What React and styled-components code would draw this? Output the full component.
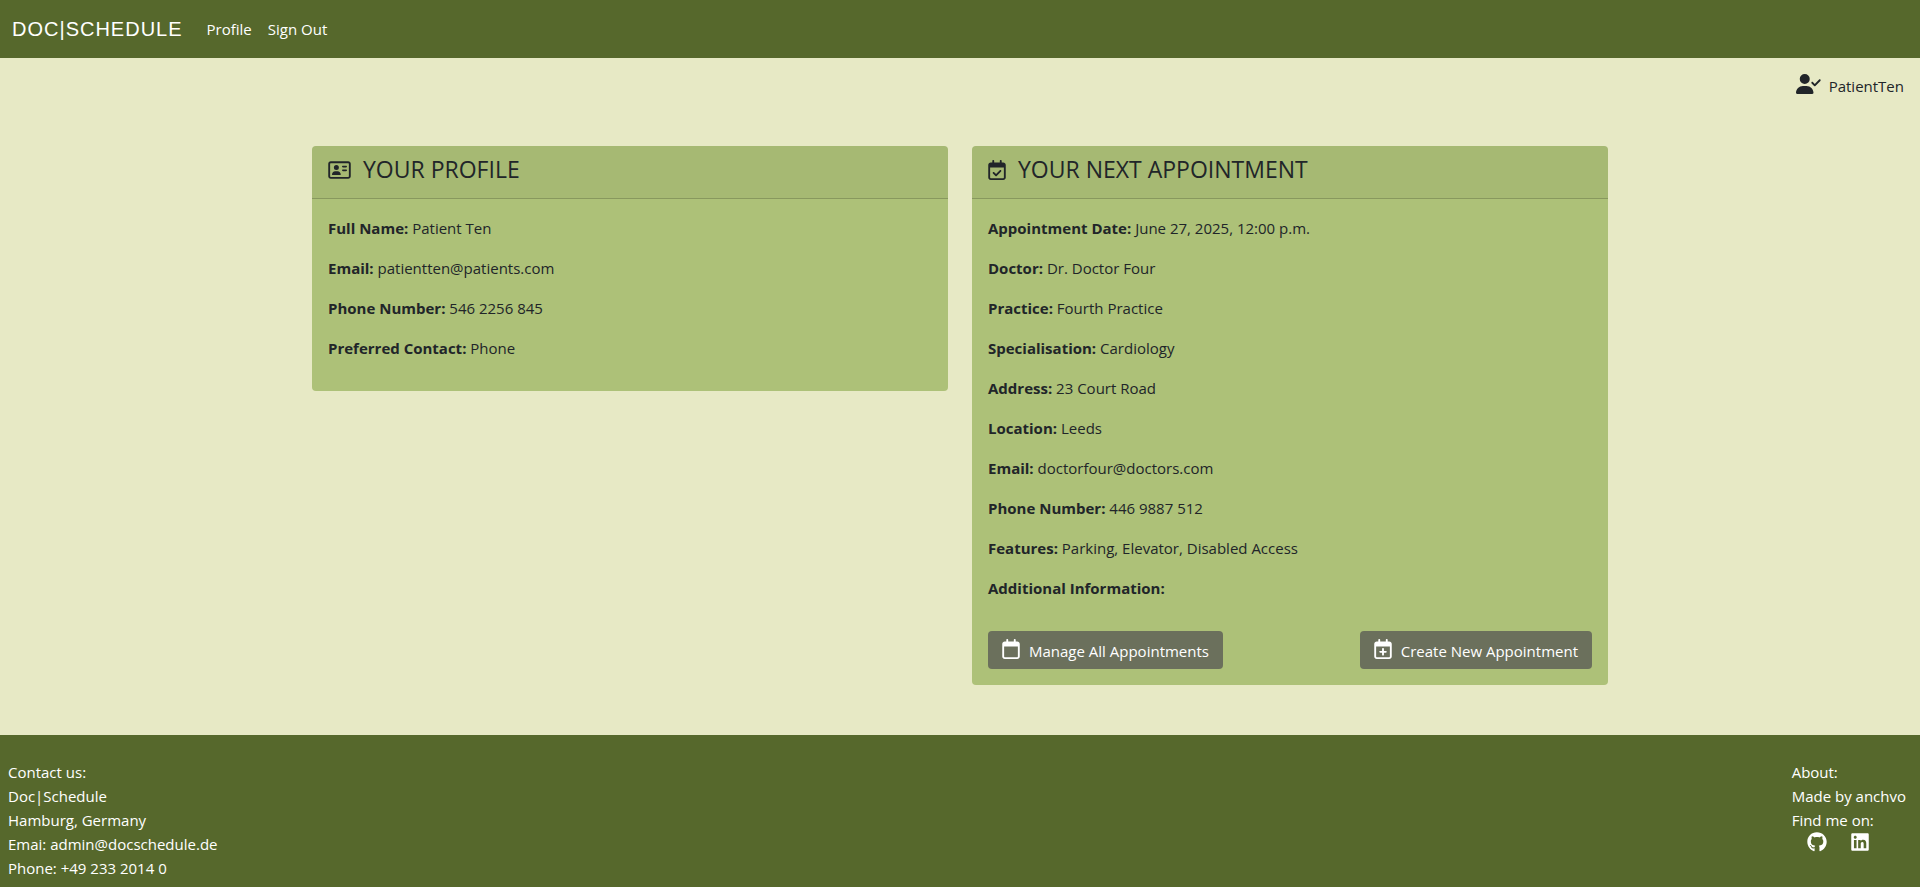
import React from "react";
import styled, { createGlobalStyle } from "styled-components";
import {
  FaGithub,
  FaLinkedin,
  FaRegAddressCard,
  FaRegCalendar,
  FaRegCalendarCheck,
  FaRegCalendarPlus,
  FaUserCheck,
} from "react-icons/fa6";

const GlobalStyle = createGlobalStyle`
  *, *::before, *::after { box-sizing: border-box; }
  body {
    margin: 0;
    background: #e7e9c5;
    color: #212529;
    font-family: "Open Sans", "Noto Sans", sans-serif;
    font-size: 15px;
    line-height: 24px;
  }
`;

const Icon = styled.span`
  flex: none;
  display: block;
  width: ${({ $width }) => $width || 18}px;
  height: 20px;

  svg {
    display: block;
    width: 100%;
    height: 100%;
  }
`;

const Page = styled.div`
  display: flex;
  flex-direction: column;
  min-height: 100vh;
`;

const Navbar = styled.nav`
  display: flex;
  align-items: center;
  gap: 16px;
  min-height: 58px;
  padding: 8px 12px;
  background: #56682c;
  color: #fff;
`;

const Brand = styled.a`
  color: inherit;
  font-family: "Liberation Sans", Arial, sans-serif;
  font-size: 20px;
  letter-spacing: 1px;
  line-height: 30px;
  text-decoration: none;
`;

const NavList = styled.ul`
  display: flex;
  margin: 0;
  padding: 0;
  list-style: none;
`;

const NavLink = styled.a`
  display: block;
  padding: 8px;
  color: inherit;
  text-decoration: none;
`;

const UserBar = styled.div`
  display: flex;
  justify-content: flex-end;
  gap: 8px;
  padding: 16px 16px 0;
`;

const Main = styled.main`
  flex: 1;
  display: grid;
  grid-template-columns: 1fr 1fr;
  align-items: start;
  gap: 24px;
  width: 100%;
  max-width: 1320px;
  margin: 0 auto;
  padding: 48px 12px 50px;
`;

const Card = styled.section`
  overflow: hidden;
  border-radius: 4px;
  background: #adc178;
`;

const CardHeader = styled.header`
  display: flex;
  align-items: center;
  gap: 12px;
  padding: 8px 16px 12px;
  border-bottom: 1px solid rgba(0, 0, 0, 0.175);
  background: rgba(33, 37, 41, 0.05);
`;

const CardTitle = styled.h2`
  margin: 0;
  padding-bottom: 2px;
  font-size: 23px;
  font-weight: 400;
  line-height: 30px;
`;

const CardBody = styled.div`
  padding: 17px 16px 15px;
`;

const Field = styled.p`
  margin: 0 0 16px;
`;

const Actions = styled.div`
  display: flex;
  justify-content: space-between;
  padding: 15px 0 1px;
`;

const Button = styled.button`
  display: flex;
  align-items: flex-start;
  gap: 9px;
  height: 38px;
  padding: 8px 14px;
  border: 0;
  border-radius: 4px;
  background: #6b705c;
  color: #fff;
  font: inherit;
  cursor: pointer;
`;

const Footer = styled.footer`
  display: flex;
  justify-content: space-between;
  padding: 25px 14px 7px 8px;
  background: #56682c;
  color: #fff;
`;

const FooterLine = styled.p`
  margin: 0;
`;

const Social = styled.div`
  display: flex;
  gap: 24px;
  padding-left: 15px;
`;

const SocialLink = styled.a`
  color: inherit;
`;

const profile = [
  ["Full Name:", "Patient Ten"],
  ["Email:", "patientten@patients.com"],
  ["Phone Number:", "546 2256 845"],
  ["Preferred Contact:", "Phone"],
];

const appointment = [
  ["Appointment Date:", "June 27, 2025, 12:00 p.m."],
  ["Doctor:", "Dr. Doctor Four"],
  ["Practice:", "Fourth Practice"],
  ["Specialisation:", "Cardiology"],
  ["Address:", "23 Court Road"],
  ["Location:", "Leeds"],
  ["Email:", "doctorfour@doctors.com"],
  ["Phone Number:", "446 9887 512"],
  ["Features:", "Parking, Elevator, Disabled Access"],
  ["Additional Information:", ""],
];

function Fields({ items }) {
  return items.map(([label, value]) => (
    <Field key={label}>
      <strong>{label}</strong> {value}
    </Field>
  ));
}

export default function App() {
  return (
    <Page>
      <GlobalStyle />
      <Navbar>
        <Brand href="#">DOC|SCHEDULE</Brand>
        <NavList>
          <li><NavLink href="#profile">Profile</NavLink></li>
          <li><NavLink href="#signout">Sign Out</NavLink></li>
        </NavList>
      </Navbar>
      <UserBar>
        <Icon $width={25}><FaUserCheck /></Icon>
        <span>PatientTen</span>
      </UserBar>
      <Main>
        <Card>
          <CardHeader>
            <Icon $width={23}><FaRegAddressCard /></Icon>
            <CardTitle>YOUR PROFILE</CardTitle>
          </CardHeader>
          <CardBody>
            <Fields items={profile} />
          </CardBody>
        </Card>
        <Card>
          <CardHeader>
            <Icon><FaRegCalendarCheck /></Icon>
            <CardTitle>YOUR NEXT APPOINTMENT</CardTitle>
          </CardHeader>
          <CardBody>
            <Fields items={appointment} />
            <Actions>
              <Button type="button">
                <Icon><FaRegCalendar /></Icon>
                Manage All Appointments
              </Button>
              <Button type="button">
                <Icon><FaRegCalendarPlus /></Icon>
                Create New Appointment
              </Button>
            </Actions>
          </CardBody>
        </Card>
      </Main>
      <Footer>
        <div>
          <FooterLine>Contact us:</FooterLine>
          <FooterLine>Doc|Schedule</FooterLine>
          <FooterLine>Hamburg, Germany</FooterLine>
          <FooterLine>Emai: admin@docschedule.de</FooterLine>
          <FooterLine>Phone: +49 233 2014 0</FooterLine>
        </div>
        <div>
          <FooterLine>About:</FooterLine>
          <FooterLine>Made by anchvo</FooterLine>
          <FooterLine>Find me on:</FooterLine>
          <Social>
            <SocialLink href="#github" aria-label="GitHub"><Icon $width={20}><FaGithub /></Icon></SocialLink>
            <SocialLink href="#linkedin" aria-label="LinkedIn"><Icon><FaLinkedin /></Icon></SocialLink>
          </Social>
        </div>
      </Footer>
    </Page>
  );
}
